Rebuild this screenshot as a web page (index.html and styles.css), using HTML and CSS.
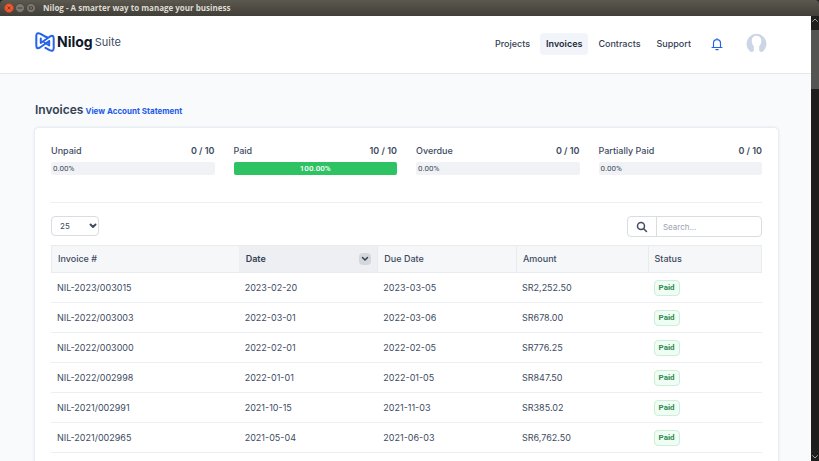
FILE: index.html
```html
<!DOCTYPE html>
<html lang="en">
<head>
<meta charset="utf-8">
<title>Nilog - A smarter way to manage your business</title>
<link rel="stylesheet" href="styles.css">
</head>
<body>
<div class="window">
  <div class="titlebar">
    <button class="wbtn close" aria-label="Close"><svg viewBox="0 0 10 10"><path d="M3.4 3.4l3.2 3.2M6.6 3.4L3.4 6.6"/></svg></button>
    <button class="wbtn" aria-label="Minimize"><svg viewBox="0 0 10 10"><path d="M2.6 5h4.8"/></svg></button>
    <button class="wbtn" aria-label="Maximize"><svg viewBox="0 0 10 10"><path d="M3.2 3.5h3.6v3H3.2z"/></svg></button>
    <span class="window-title">Nilog - A smarter way to manage your business</span>
  </div>
  <div class="viewport">
    <div class="page">
      <header class="header">
        <a class="brand" href="#">
          <svg class="mark" viewBox="0 0 20 20"><path d="M9.500 4.200L5.500 1.800Q1.300 0 1.300 4V13.500Q1.300 17.500 5 15.500L14.200 9M10.500 15.800L14.500 18.200Q18.700 20 18.700 16V6.500Q18.700 2.500 15 4.500L5.800 11V6.500M14.200 9V13.500L9.500 10.500M9.500 4.200L12 5.200"/></svg>
          <span class="name">Nilog</span><span class="suite">Suite</span>
        </a>
        <nav class="nav">
          <a href="#">Projects</a>
          <a href="#" class="active">Invoices</a>
          <a href="#">Contracts</a>
          <a href="#">Support</a>
        </nav>
        <button class="bell" aria-label="Notifications"><svg viewBox="0 0 24 24"><path d="M3.500 18h17M6 18v-7.500a6 6 0 0 1 12 0V18M12 4.500V2.500M10 21.500h4"/></svg></button>
        <button class="avatar" aria-label="Account"><svg viewBox="0 0 22 22"><path class="bg" d="M4 19.200A10.500 10.500 0 1 1 18 19.200Q15.500 21 14 18.800L11 14L8 18.800Q6.500 21 4 19.200Z"/><path class="fg" d="M11 3c3.200 0 5 2.200 5 5 0 3-1.200 4.700-2.200 6v6.500H8.200V14C7.200 12.700 6 11 6 8c0-2.800 1.800-5 5-5z"/></svg></button>
      </header>
      <main class="main">
        <div class="heading"><h1>Invoices</h1><a href="#">View Account Statement</a></div>
        <section class="card">
          <div class="stats">
            <div class="stat"><div class="stat-head"><span>Unpaid</span><b>0 / 10</b></div><div class="bar">0.00%</div></div>
            <div class="stat"><div class="stat-head"><span>Paid</span><b>10 / 10</b></div><div class="bar full">100.00%</div></div>
            <div class="stat"><div class="stat-head"><span>Overdue</span><b>0 / 10</b></div><div class="bar">0.00%</div></div>
            <div class="stat"><div class="stat-head"><span>Partially Paid</span><b>0 / 10</b></div><div class="bar">0.00%</div></div>
          </div>
          <div class="tools">
            <div class="select-box">
              <select aria-label="Rows per page"><option>25</option><option>50</option><option>100</option></select>
              <svg viewBox="0 0 8 6"><path d="M1.500 1.500L4 4l2.500-2.500"/></svg>
            </div>
            <div class="search">
              <label for="q" aria-label="Search"><svg viewBox="0 0 12 12"><circle cx="5" cy="5" r="3.500"/><path d="M7.700 7.700L10.500 10.500"/></svg></label>
              <input id="q" type="text" placeholder="Search...">
            </div>
          </div>
          <table>
            <colgroup><col class="c1"><col class="c2"><col class="c2"><col class="c4"><col></colgroup>
            <thead><tr>
              <th>Invoice #</th>
              <th class="sorted"><div class="sort">Date<span class="chev"><svg viewBox="0 0 8 6"><path d="M1.500 1.500L4 4l2.500-2.500"/></svg></span></div></th>
              <th>Due Date</th><th>Amount</th><th>Status</th>
            </tr></thead>
            <tbody>
              <tr><td>NIL-2023/003015</td><td>2023-02-20</td><td>2023-03-05</td><td>SR2,252.50</td><td><span class="badge">Paid</span></td></tr>
              <tr><td>NIL-2022/003003</td><td>2022-03-01</td><td>2022-03-06</td><td>SR678.00</td><td><span class="badge">Paid</span></td></tr>
              <tr><td>NIL-2022/003000</td><td>2022-02-01</td><td>2022-02-05</td><td>SR776.25</td><td><span class="badge">Paid</span></td></tr>
              <tr><td>NIL-2022/002998</td><td>2022-01-01</td><td>2022-01-05</td><td>SR847.50</td><td><span class="badge">Paid</span></td></tr>
              <tr><td>NIL-2021/002991</td><td>2021-10-15</td><td>2021-11-03</td><td>SR385.02</td><td><span class="badge">Paid</span></td></tr>
              <tr><td>NIL-2021/002965</td><td>2021-05-04</td><td>2021-06-03</td><td>SR6,762.50</td><td><span class="badge">Paid</span></td></tr>
            </tbody>
          </table>
        </section>
      </main>
    </div>
    <div class="scrollbar">
      <svg viewBox="0 0 8 6"><path d="M1.500 4.500L4 2l2.500 2.500"/></svg>
      <div class="track"><div class="thumb"></div></div>
      <svg viewBox="0 0 8 6"><path d="M1.500 1.500L4 4l2.500-2.500"/></svg>
    </div>
  </div>
</div>
</body>
</html>
```
FILE: styles.css
```css
* { box-sizing: border-box; }
body { margin: 0; font-family: Inter, "Liberation Sans", sans-serif; font-size: 9px; line-height: 14px; color: #404b5f; background: #1e1e1c; }
a { color: inherit; text-decoration: none; }
button { padding: 0; border: 0; background: none; }
svg { display: block; fill: none; stroke: currentColor; stroke-linecap: round; stroke-linejoin: round; }

.window { display: flex; flex-direction: column; height: 100vh; overflow: hidden; }
.titlebar { flex: none; display: flex; align-items: center; gap: 1px; height: 16px; padding: 0 4px; background: linear-gradient(#5b584f, #403e38); border-radius: 4px 4px 0 0; }
.wbtn { width: 10px; height: 10px; color: #35342f; }
.wbtn svg { width: 10px; height: 10px; background: #7c7a71; border: 1px solid #4a4841; border-radius: 50%; }
.close svg { background: #ee5b33; color: #7c2a14; border-color: #a2452b; }
.window-title { margin-left: 6px; font-family: "Open Sans", sans-serif; font-size: 8px; font-weight: 700; color: #dfdbd2; }

.viewport { flex: 1; display: flex; min-height: 0; }
.page { flex: 1; overflow: hidden; background: #f8fafc; }
.header { display: flex; align-items: center; height: 58px; padding: 0 44px 2px 35px; background: #fff; border-bottom: 1px solid #e2e8f0; }
.brand { display: flex; align-items: center; margin-right: auto; padding-bottom: 4px; }
.mark { width: 20px; height: 20px; margin-right: 2px; stroke: #2563eb; stroke-width: 2; }
.name { font-size: 14px; line-height: 16px; font-weight: 700; color: #0f172a; }
.suite { margin-left: 2px; font-size: 11px; line-height: 16px; }
.nav { display: flex; gap: 4px; }
.nav a { padding: 4px 6px; border-radius: 4px; font-weight: 500; color: #334155; }
.nav .active { background: #f1f5f9; color: #1e293b; font-weight: 600; }
.bell { margin-left: 13px; color: #2563eb; }
.bell svg { width: 14px; height: 14px; stroke-width: 2; }
.avatar { margin-left: 22px; }
.avatar svg { width: 21px; height: 21px; stroke: none; }
.avatar .bg { fill: #cbd5e6; }
.avatar .fg { fill: #fff; }

.main { padding: 29px 33px 0 35px; }
.heading { display: flex; align-items: baseline; gap: 2px; margin-bottom: 10px; }
h1 { margin: 0; font-size: 12px; line-height: 14px; font-weight: 600; color: #334155; }
.heading a { font-size: 8px; font-weight: 700; color: #1d5bea; }
.card { padding: 16px; background: #fff; border-radius: 4px; box-shadow: 0 0 3px #cbd5e1; }

.stats { display: grid; grid-template-columns: repeat(4, 1fr); gap: 19px; padding-bottom: 27px; border-bottom: 1px solid #eceef1; }
.stat-head { display: flex; justify-content: space-between; margin-bottom: 4px; font-weight: 500; }
.stat-head b { font-weight: 600; }
.bar { height: 13px; padding: 0 2px; background: #f1f2f5; border-radius: 2px; font: 8px/13px Roboto, sans-serif; }
.full { background: #2dc362; color: #fff; text-align: center; font-weight: 500; }

.tools { display: flex; justify-content: space-between; margin: 13px 0 8px; }
.select-box { position: relative; width: 48px; height: 20px; }
select { appearance: none; width: 100%; height: 100%; padding: 0 8px; background: #fff; border: 1px solid #d9dce1; border-radius: 4px; font: 8px Inter, sans-serif; color: #404b5f; }
.select-box svg { position: absolute; right: 2px; top: 7px; width: 8px; height: 6px; stroke-width: 2; pointer-events: none; }
.search { display: flex; width: 19%; height: 21px; border: 1px solid #d9dce1; border-radius: 4px; }
.search label { display: grid; place-items: center; width: 29px; border-right: 1px solid #d9dce1; }
.search svg { width: 12px; height: 12px; stroke-width: 1.5; }
.search input { flex: 1; min-width: 0; padding: 0 6px; border: 0; background: none; font: 8px Inter, sans-serif; }
.search input::placeholder { color: #9ca3af; }

table { width: 100%; table-layout: fixed; border-collapse: separate; border-spacing: 0; }
.c1 { width: 26.4%; }
.c2 { width: 19.5%; }
.c4 { width: 18.5%; }
th { height: 28px; padding: 0 6px; background: #f6f7f9; border: 1px solid #e9ebee; border-right: 0; text-align: left; font-weight: 500; }
th:last-child { border-right: 1px solid #e9ebee; }
th.sorted { background: #edeff2; border-left-color: #edeff2; font-weight: 600; color: #334155; }
.sort { display: flex; align-items: center; justify-content: space-between; }
.chev { display: grid; place-items: center; width: 12px; height: 12px; background: #d5d7db; border-radius: 4px; }
.chev svg { width: 8px; height: 6px; stroke-width: 1.5; }
td { height: 30px; padding: 0 6px; border-bottom: 1px solid #eceef1; }
.badge { display: inline-block; padding: 0 4px; border: 1px solid #cdeed8; border-radius: 4px; background: #f0fdf4; color: #2c8a4d; font: 700 8px/14px Roboto, sans-serif; vertical-align: middle; }

.scrollbar { flex: none; display: flex; flex-direction: column; align-items: center; width: 8px; background: #1e1e1c; color: #a0a09c; }
.scrollbar svg { width: 8px; height: 6px; margin: 1px 0; stroke-width: 1; }
.track { flex: 1; width: 100%; padding-top: 6px; }
.thumb { height: 14%; background: #545452; }
```
